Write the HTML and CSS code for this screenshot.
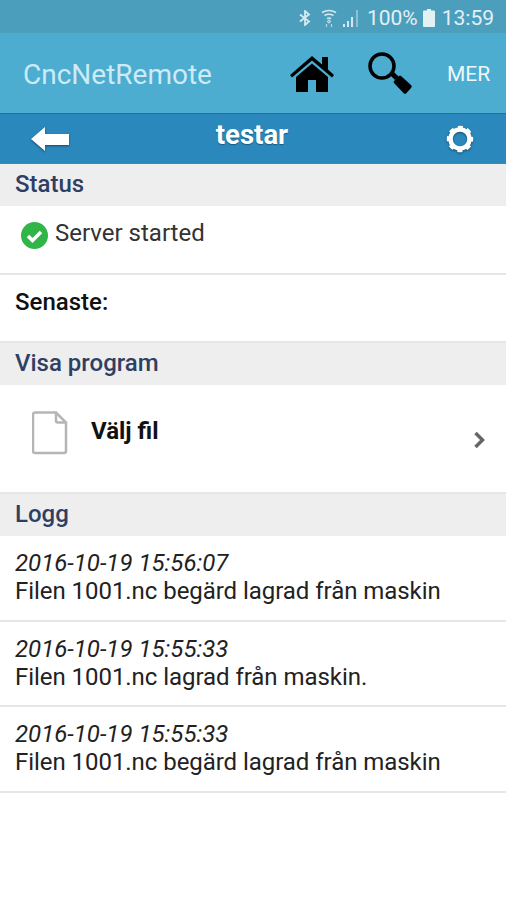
FILE: index.html
```html
<!DOCTYPE html>
<html lang="en">
<head>
    <meta charset="UTF-8">
    <meta name="viewport" content="width=device-width, initial-scale=1.0">
    <title>CncNetRemote</title>
    <link rel="stylesheet" href="styles.css">
</head>
<body>
    <div class="statusbar">
        <svg class="sb-bt" width="12" height="16" viewBox="0 0 12 16"><path d="M1 4.500l9 7-4 3.500v-14l4 3.500-9 7" fill="none" stroke="#d5e9f0" stroke-width="1.800"/></svg>
        <svg class="sb-wifi" width="16" height="18" viewBox="0 0 16 18"><path d="M1 3.500q7-4 14 0M3.500 6.500q4.500-2.500 9 0M6 9.500q2-1 4 0" fill="none" stroke="#d5e9f0" stroke-width="1.500"/><path d="M8 11l1.500 1.500-1.500 1.500-1.500-1.500zM5.500 15v3M10.500 15v3" fill="none" stroke="#b8d8e2" stroke-width="1.200"/></svg>
        <svg class="sb-signal" width="18" height="18" viewBox="0 0 18 18"><path d="M1 18v-3h2v3zM5 18v-6h2v6zM9 18v-10h2v10z" fill="#d5e9f0"/><path d="M14 18v-17h2v17z" fill="#8fc0d0"/></svg>
        <span class="sb-text sb-pct">100%</span>
        <svg class="sb-batt" width="12" height="18" viewBox="0 0 12 18"><path d="M4 0h4v1.500h3a1 1 0 0 1 1 1v14.500a1 1 0 0 1-1 1h-10a1 1 0 0 1-1-1v-14.500a1 1 0 0 1 1-1h3z" fill="#e3f0f4"/></svg>
        <span class="sb-text">13:59</span>
    </div>

    <div class="toolbar">
        <span class="app-title">CncNetRemote</span>
        <svg class="tb-home" width="46" height="38" viewBox="0 0 46 38"><path d="M1 21L23 2l10 8.500V3h6v12.500L45 21l-2 2.500L23 6.500 3 23.500z" fill="#000"/><path d="M7 23L23 9.500 39 23v15H27V26h-8v12H7z" fill="#000"/></svg>
        <svg class="tb-search" width="46" height="46" viewBox="0 0 46 46"><circle cx="15" cy="15" r="12" fill="none" stroke="#000" stroke-width="3.500"/><path d="M23 24l4-3 5 5-4 3z" fill="#000"/><path d="M27 30l5-5a1.500 1.500 0 0 1 2 0l10 9a2 2 0 0 1 0 3l-4.500 5a2 2 0 0 1-3 0l-9.500-10a1.500 1.500 0 0 1 0-2z" fill="#000"/></svg>
        <span class="tb-more">MER</span>
    </div>

    <div class="subbar">
        <svg class="sub-back" width="40" height="28" viewBox="0 0 40 28"><path d="M1 14L15 2v7h24v11H15v6z" fill="#fff"/></svg>
        <span class="sub-title">testar</span>
        <svg class="sub-gear" width="28" height="30" viewBox="0 0 28 30"><circle cx="14" cy="15" r="9.500" fill="none" stroke="#fff" stroke-width="4.500"/><circle cx="14" cy="15" r="12" fill="none" stroke="#fff" stroke-width="2.500" stroke-dasharray="5 4.420" stroke-dashoffset="2.500"/></svg>
    </div>

    <div class="section-head">Status</div>
    <div class="row row-status">
        <svg class="ok-icon" width="27" height="27" viewBox="0 0 27 27"><circle cx="13.500" cy="13.500" r="13.500" fill="#2fb548"/><path d="M7 14l4.500 4.500L20 10" fill="none" stroke="#fff" stroke-width="3.500"/></svg>
        <span>Server started</span>
    </div>
    <div class="row row-latest">Senaste:</div>

    <div class="section-head">Visa program</div>
    <div class="row row-file">
        <svg class="file-icon" width="36" height="44" viewBox="0 0 36 44"><path d="M3 1.500h21l10 10v28.500a2 2 0 0 1-2 2H3a2 2 0 0 1-2-2v-36.500a2 2 0 0 1 2-2z" fill="#fff" stroke="#b5b5b5" stroke-width="2.500"/><path d="M24 1.500v8a2 2 0 0 0 2 2h8" fill="none" stroke="#b5b5b5" stroke-width="2.500"/></svg>
        <span class="file-label">Välj fil</span>
        <svg class="chevron" width="13" height="18" viewBox="0 0 13 18"><path d="M2.500 2l7 7-7 7" fill="none" stroke="#666" stroke-width="3.500"/></svg>
    </div>

    <div class="section-head">Logg</div>
    <div class="log-row">
        <em>2016-10-19 15:56:07</em>
        <span>Filen 1001.nc begärd lagrad från maskin</span>
    </div>
    <div class="log-row">
        <em>2016-10-19 15:55:33</em>
        <span>Filen 1001.nc lagrad från maskin.</span>
    </div>
    <div class="log-row">
        <em>2016-10-19 15:55:33</em>
        <span>Filen 1001.nc begärd lagrad från maskin</span>
    </div>
</body>
</html>
```

FILE: styles.css
```css
body {
    margin: 0;
    background-color: #fff;
    color: #111;
    font-family: Roboto, "Liberation Sans", sans-serif;
    font-size: 24px;
}
.statusbar {
    height: 33px;
    background-color: #4b9fbd;
    display: flex;
    align-items: center;
    justify-content: flex-end;
    padding-right: 12px;
    padding-top: 2px;
    box-sizing: border-box;
}
.sb-text {
    color: #e3f0f4;
    font-size: 21px;
}
.sb-wifi {
    margin-left: 10px;
}
.sb-signal {
    margin-left: 5px;
}
.sb-pct {
    margin-left: 7px;
}
.sb-batt {
    margin-left: 5px;
    margin-right: 7px;
}
.toolbar {
    height: 80px;
    background-color: #4cadd1;
    display: flex;
    align-items: center;
    box-sizing: border-box;
    padding-left: 23px;
}
.app-title {
    color: #cdeaf5;
    font-size: 28px;
    width: 266px;
    padding-top: 2px;
}
.tb-search {
    margin-left: 32px;
    margin-top: 2px;
}
.tb-more {
    color: #eef8fb;
    font-size: 21px;
    margin-left: 34px;
    padding-top: 2px;
}
.subbar {
    height: 51px;
    background-color: #2a88bd;
    border-top: 1px solid #20739f;
    border-bottom: 1px solid #5f7f90;
    box-sizing: border-box;
    display: grid;
    grid-template-columns: 1fr auto 1fr;
    align-items: center;
    padding: 0 32px 0 30px;
}
.sub-back,
.sub-gear {
    filter: drop-shadow(0 1px 1px rgba(0, 0, 0, 0.45));
}
.sub-gear {
    justify-self: end;
}
.sub-title {
    color: #fff;
    font-size: 27.5px;
    font-weight: 700;
    margin-bottom: 8px;
    text-shadow: 0 1px 1px rgba(0, 0, 0, 0.35);
}
.section-head {
    height: 42px;
    line-height: 40px;
    background-color: #eee;
    color: #2f3f63;
    font-weight: 500;
    padding-left: 15px;
}
.row {
    background-color: #fff;
    box-sizing: border-box;
    border-bottom: 2px solid #e6e6e6;
}
.row-status {
    height: 69px;
    display: flex;
    align-items: flex-start;
    padding: 14px 0 0 21px;
    color: #333;
}
.row-status span {
    margin-left: 7px;
    line-height: 26px;
}
.ok-icon {
    margin-top: 2px;
}
.row-latest {
    height: 68px;
    padding: 14px 0 0 15px;
    font-weight: 500;
    line-height: 26px;
}
.row-file {
    height: 109px;
    display: flex;
    align-items: flex-start;
    padding: 26px 20px 0 32px;
}
.file-label {
    font-weight: 700;
    margin-left: 23px;
    line-height: 40px;
    color: #111;
    flex: 1;
}
.chevron {
    margin-top: 20px;
}
.log-row {
    height: 85.5px;
    box-sizing: border-box;
    border-bottom: 2px solid #e6e6e6;
    padding: 13px 15px 0;
    line-height: 28px;
}
.log-row em,
.log-row span {
    display: block;
    color: #222;
}
.log-row span {
    letter-spacing: -0.05px;
}
```
